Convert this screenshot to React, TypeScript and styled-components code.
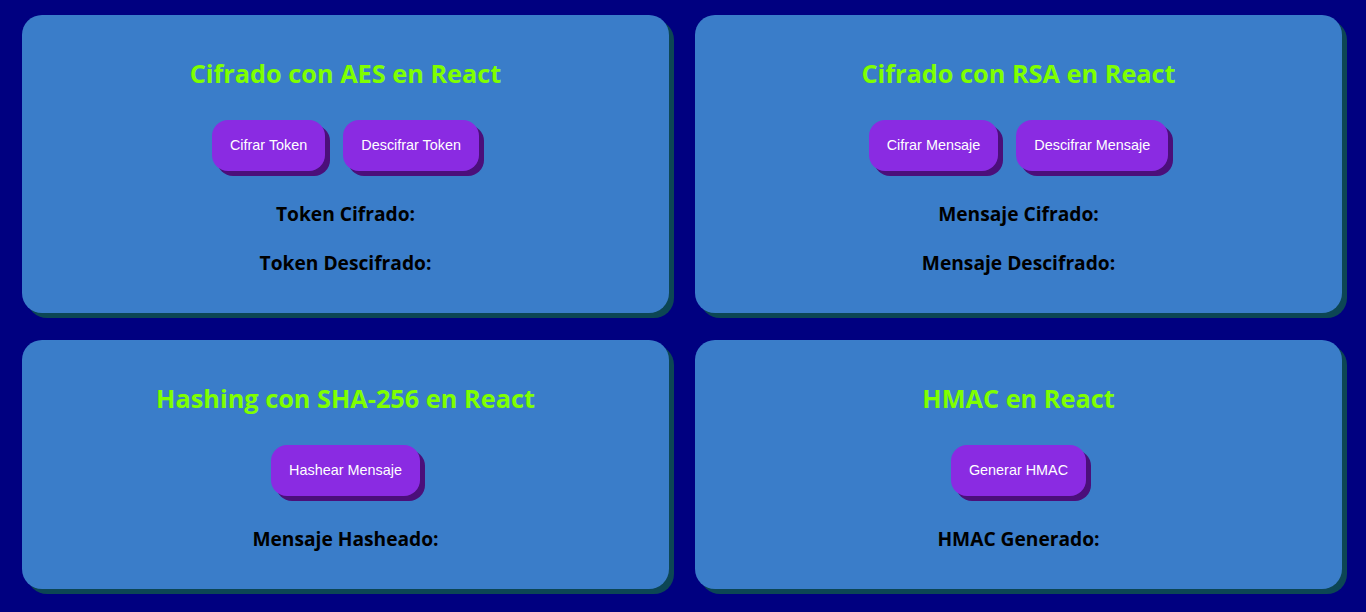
import React from "react";
import styled, { createGlobalStyle } from "styled-components";

const GlobalStyle = createGlobalStyle`
  html, body {
    margin: 0;
    padding: 0;
    background: #000080;
  }
  body {
    font-family: "Open Sans", "Noto Sans", sans-serif;
  }
`;

const Page = styled.div`
  min-height: 612px;
  box-sizing: border-box;
  padding: 15px 24px 20px 22px;
  display: grid;
  grid-template-columns: 1fr 1fr;
  column-gap: 26px;
  row-gap: 27px;
  align-content: start;
`;

const Card = styled.section`
  background: #3a7dc9;
  border-radius: 20px;
  box-shadow: 5px 5px 0 #0c4654;
  padding: 42px 20px 37px;
  display: flex;
  flex-direction: column;
  align-items: center;
  text-align: center;
`;

const Title = styled.h2`
  margin: 0;
  font-size: 25.3px;
  line-height: 32px;
  font-weight: 700;
  color: #7fff00;
`;

const Actions = styled.div`
  display: flex;
  gap: 18px;
  margin-top: 31px;
`;

const Button = styled.button`
  font-family: "Liberation Sans", Arial, sans-serif;
  font-size: 14.4px;
  line-height: 17px;
  padding: 17px 18px;
  color: #fff;
  background: #8a2be2;
  border: none;
  border-radius: 16px;
  box-shadow: 5px 5px 0 #4b0f7a;
  cursor: pointer;
`;

const Result = styled.h3<{ $first?: boolean }>`
  margin: ${(p) => (p.$first ? "30px" : "23px")} 0 0;
  font-size: 19.2px;
  line-height: 26px;
  font-weight: 700;
  color: #000;
`;

type Section = {
  title: string;
  buttons: string[];
  results: string[];
};

const sections: Section[] = [
  {
    title: "Cifrado con AES en React",
    buttons: ["Cifrar Token", "Descifrar Token"],
    results: ["Token Cifrado:", "Token Descifrado:"],
  },
  {
    title: "Cifrado con RSA en React",
    buttons: ["Cifrar Mensaje", "Descifrar Mensaje"],
    results: ["Mensaje Cifrado:", "Mensaje Descifrado:"],
  },
  {
    title: "Hashing con SHA-256 en React",
    buttons: ["Hashear Mensaje"],
    results: ["Mensaje Hasheado:"],
  },
  {
    title: "HMAC en React",
    buttons: ["Generar HMAC"],
    results: ["HMAC Generado:"],
  },
];

const App = () => {
  return (
    <>
      <GlobalStyle />
      <Page>
        {sections.map((s) => (
          <Card key={s.title}>
            <Title>{s.title}</Title>
            <Actions>
              {s.buttons.map((b) => (
                <Button key={b}>{b}</Button>
              ))}
            </Actions>
            {s.results.map((r, i) => (
              <Result key={r} $first={i === 0}>
                {r}
              </Result>
            ))}
          </Card>
        ))}
      </Page>
    </>
  );
};

export default App;
